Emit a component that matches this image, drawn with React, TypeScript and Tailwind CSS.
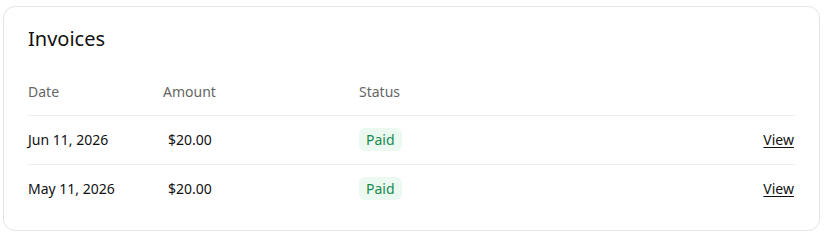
import React from "react";

type Invoice = {
  id: string;
  date: string;
  amount: string;
  status: string;
};

const invoices: Invoice[] = [
  { id: "1", date: "Jun 11, 2026", amount: "$20.00", status: "Paid" },
  { id: "2", date: "May 11, 2026", amount: "$20.00", status: "Paid" }
];

function InvoiceRow({ invoice }: { invoice: Invoice }) {
  return (
    <tr className="border-t border-[#efefef]">
      <td className="h-[49px] pb-px text-[14px] text-[#111]">{invoice.date}</td>
      <td className="h-[49px] pb-px pl-[5px] text-[14px] text-[#111]">{invoice.amount}</td>
      <td className="h-[49px] pb-px">
        <span className="inline-block rounded-md bg-[#ecf9f0] px-[7px] py-[1px] text-[14px] text-[#188a4f]">
          {invoice.status}
        </span>
      </td>
      <td className="h-[49px] pb-px text-right">
        <a href="#" className="pr-px text-[14px] text-[#111] underline underline-offset-2">
          View
        </a>
      </td>
    </tr>
  );
}

export default function App() {
  return (
    <div className="bg-white h-[242px] pl-[3px] pr-[8px] pt-[6px] font-['Segoe_UI','Noto_Sans',sans-serif]">
      <div className="rounded-xl border border-[#e4e4e4] px-6 pt-[20px] pb-[17px]">
        <h2 className="text-[20px] leading-6 text-[#111]">Invoices</h2>
        <table className="mt-[17px] w-full border-collapse">
          <thead>
            <tr>
              <th className="w-[135px] h-[47px] text-left text-[14px] font-normal text-[#666]">Date</th>
              <th className="w-[196px] text-left text-[14px] font-normal text-[#666]">Amount</th>
              <th className="text-left text-[14px] font-normal text-[#666]">Status</th>
              <th></th>
            </tr>
          </thead>
          <tbody>
            {invoices.map((invoice) => (
              <InvoiceRow key={invoice.id} invoice={invoice} />
            ))}
          </tbody>
        </table>
      </div>
    </div>
  );
}
